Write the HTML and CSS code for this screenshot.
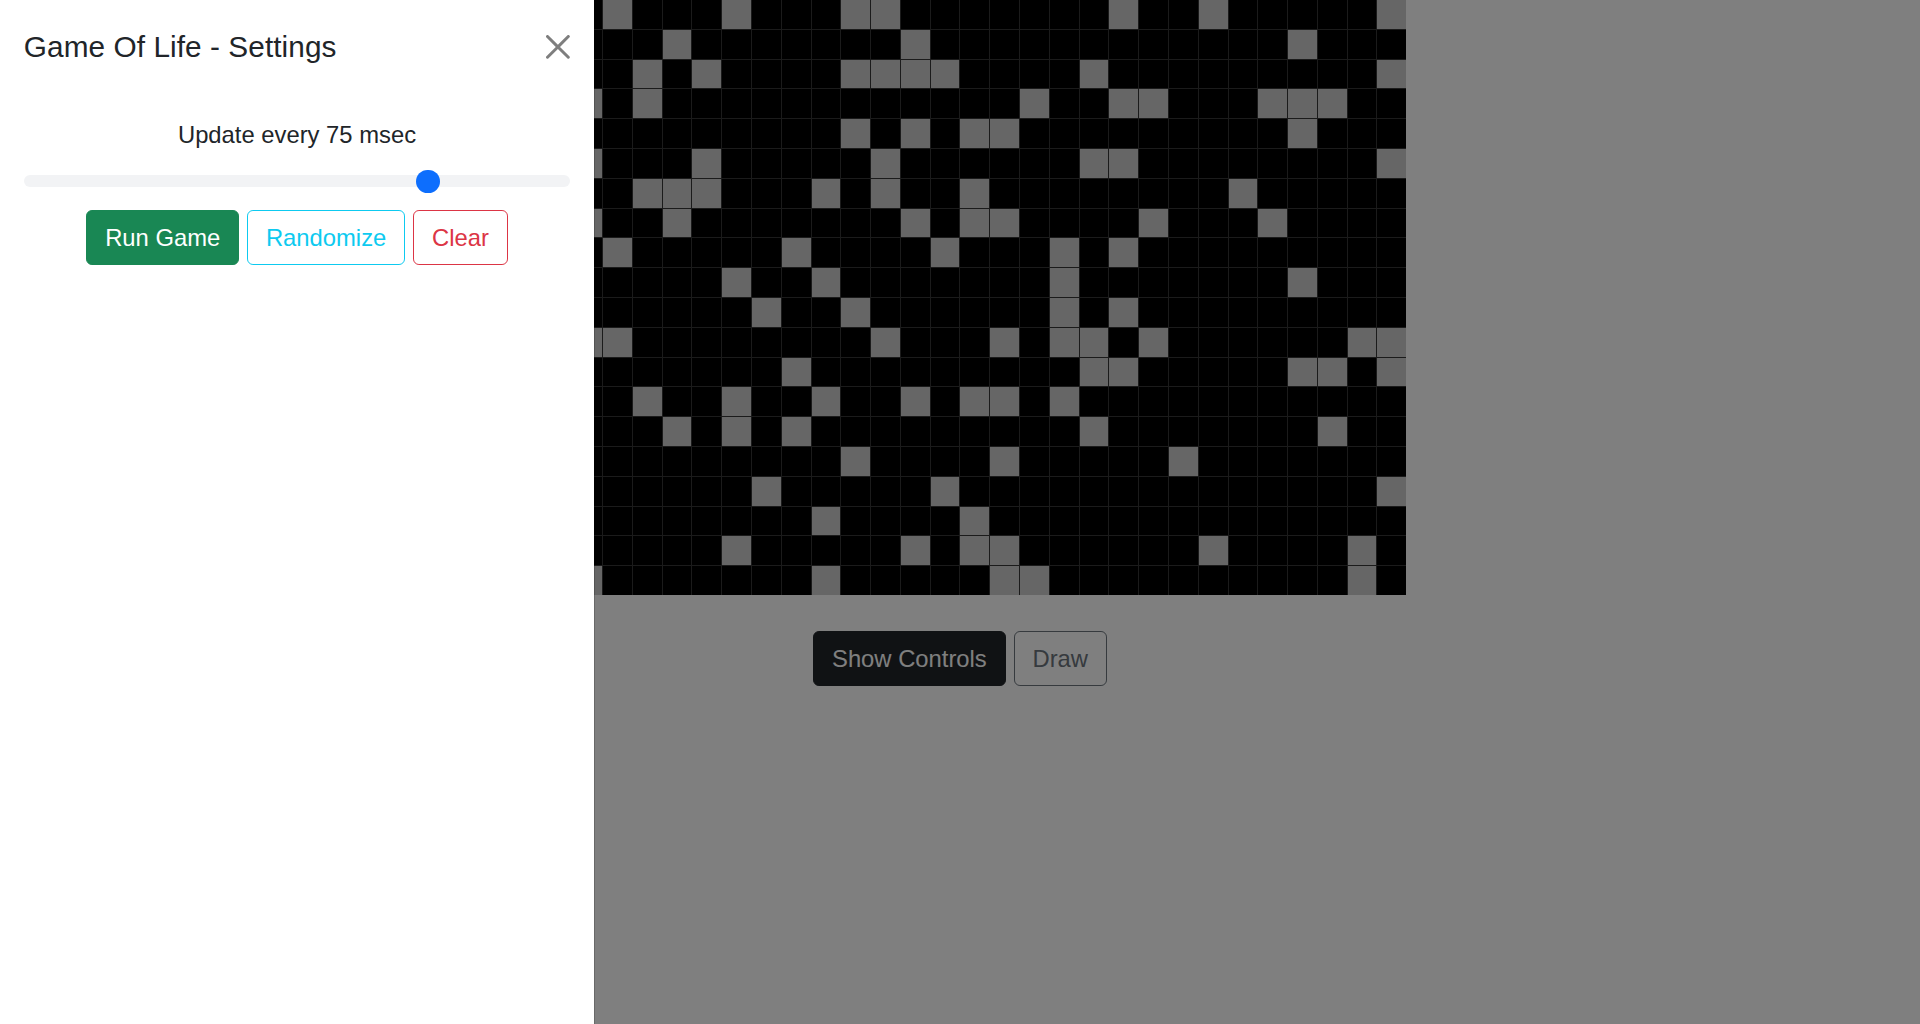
FILE: index.html
```html
<!DOCTYPE html>
<html lang="en">
<head>
<meta charset="utf-8">
<title>Game Of Life</title>
<link rel="stylesheet" href="styles.css">
</head>
<body>
<main class="page">
  <div class="board">
    <i></i><i></i><i></i><i class="on"></i><i></i><i></i><i></i><i class="on"></i><i></i><i></i><i></i><i class="on"></i><i class="on"></i><i></i><i></i><i></i><i></i><i></i><i></i><i></i><i class="on"></i><i></i><i></i><i class="on"></i><i></i><i></i><i></i><i></i><i></i><i class="on"></i>
    <i></i><i></i><i></i><i></i><i></i><i class="on"></i><i></i><i></i><i></i><i></i><i></i><i></i><i></i><i class="on"></i><i></i><i></i><i></i><i></i><i></i><i></i><i></i><i></i><i></i><i></i><i></i><i></i><i class="on"></i><i></i><i></i><i></i>
    <i></i><i></i><i></i><i></i><i class="on"></i><i></i><i class="on"></i><i></i><i></i><i></i><i></i><i class="on"></i><i class="on"></i><i class="on"></i><i class="on"></i><i></i><i></i><i></i><i></i><i class="on"></i><i></i><i></i><i></i><i></i><i></i><i></i><i></i><i></i><i></i><i class="on"></i>
    <i></i><i></i><i class="on"></i><i></i><i class="on"></i><i></i><i></i><i></i><i></i><i></i><i></i><i></i><i></i><i></i><i></i><i></i><i></i><i class="on"></i><i></i><i></i><i class="on"></i><i class="on"></i><i></i><i></i><i></i><i class="on"></i><i class="on"></i><i class="on"></i><i></i><i></i>
    <i></i><i></i><i></i><i></i><i></i><i></i><i></i><i></i><i></i><i></i><i></i><i class="on"></i><i></i><i class="on"></i><i></i><i class="on"></i><i class="on"></i><i></i><i></i><i></i><i></i><i></i><i></i><i></i><i></i><i></i><i class="on"></i><i></i><i></i><i></i>
    <i></i><i></i><i class="on"></i><i></i><i></i><i></i><i class="on"></i><i></i><i></i><i></i><i></i><i></i><i class="on"></i><i></i><i></i><i></i><i></i><i></i><i></i><i class="on"></i><i class="on"></i><i></i><i></i><i></i><i></i><i></i><i></i><i></i><i></i><i class="on"></i>
    <i></i><i></i><i></i><i></i><i class="on"></i><i class="on"></i><i class="on"></i><i></i><i></i><i></i><i class="on"></i><i></i><i class="on"></i><i></i><i></i><i class="on"></i><i></i><i></i><i></i><i></i><i></i><i></i><i></i><i></i><i class="on"></i><i></i><i></i><i></i><i></i><i></i>
    <i></i><i></i><i class="on"></i><i></i><i></i><i class="on"></i><i></i><i></i><i></i><i></i><i></i><i></i><i></i><i class="on"></i><i></i><i class="on"></i><i class="on"></i><i></i><i></i><i></i><i></i><i class="on"></i><i></i><i></i><i></i><i class="on"></i><i></i><i></i><i></i><i></i>
    <i></i><i></i><i></i><i class="on"></i><i></i><i></i><i></i><i></i><i></i><i class="on"></i><i></i><i></i><i></i><i></i><i class="on"></i><i></i><i></i><i></i><i class="on"></i><i></i><i class="on"></i><i></i><i></i><i></i><i></i><i></i><i></i><i></i><i></i><i></i>
    <i></i><i></i><i></i><i></i><i></i><i></i><i></i><i class="on"></i><i></i><i></i><i class="on"></i><i></i><i></i><i></i><i></i><i></i><i></i><i></i><i class="on"></i><i></i><i></i><i></i><i></i><i></i><i></i><i></i><i class="on"></i><i></i><i></i><i></i>
    <i></i><i></i><i></i><i></i><i></i><i></i><i></i><i></i><i class="on"></i><i></i><i></i><i class="on"></i><i></i><i></i><i></i><i></i><i></i><i></i><i class="on"></i><i></i><i class="on"></i><i></i><i></i><i></i><i></i><i></i><i></i><i></i><i></i><i></i>
    <i></i><i></i><i class="on"></i><i class="on"></i><i></i><i></i><i></i><i></i><i></i><i></i><i></i><i></i><i class="on"></i><i></i><i></i><i></i><i class="on"></i><i></i><i class="on"></i><i class="on"></i><i></i><i class="on"></i><i></i><i></i><i></i><i></i><i></i><i></i><i class="on"></i><i class="on"></i>
    <i></i><i></i><i></i><i></i><i></i><i></i><i></i><i></i><i></i><i class="on"></i><i></i><i></i><i></i><i></i><i></i><i></i><i></i><i></i><i></i><i class="on"></i><i class="on"></i><i></i><i></i><i></i><i></i><i></i><i class="on"></i><i class="on"></i><i></i><i class="on"></i>
    <i></i><i></i><i></i><i></i><i class="on"></i><i></i><i></i><i class="on"></i><i></i><i></i><i class="on"></i><i></i><i></i><i class="on"></i><i></i><i class="on"></i><i class="on"></i><i></i><i class="on"></i><i></i><i></i><i></i><i></i><i></i><i></i><i></i><i></i><i></i><i></i><i></i>
    <i></i><i></i><i></i><i></i><i></i><i class="on"></i><i></i><i class="on"></i><i></i><i class="on"></i><i></i><i></i><i></i><i></i><i></i><i></i><i></i><i></i><i></i><i class="on"></i><i></i><i></i><i></i><i></i><i></i><i></i><i></i><i class="on"></i><i></i><i></i>
    <i></i><i></i><i></i><i></i><i></i><i></i><i></i><i></i><i></i><i></i><i></i><i class="on"></i><i></i><i></i><i></i><i></i><i class="on"></i><i></i><i></i><i></i><i></i><i></i><i class="on"></i><i></i><i></i><i></i><i></i><i></i><i></i><i></i>
    <i></i><i></i><i></i><i></i><i></i><i></i><i></i><i></i><i class="on"></i><i></i><i></i><i></i><i></i><i></i><i class="on"></i><i></i><i></i><i></i><i></i><i></i><i></i><i></i><i></i><i></i><i></i><i></i><i></i><i></i><i></i><i class="on"></i>
    <i></i><i></i><i></i><i></i><i></i><i></i><i></i><i></i><i></i><i></i><i class="on"></i><i></i><i></i><i></i><i></i><i class="on"></i><i></i><i></i><i></i><i></i><i></i><i></i><i></i><i></i><i></i><i></i><i></i><i></i><i></i><i></i>
    <i></i><i></i><i></i><i></i><i></i><i></i><i></i><i class="on"></i><i></i><i></i><i></i><i></i><i></i><i class="on"></i><i></i><i class="on"></i><i class="on"></i><i></i><i></i><i></i><i></i><i></i><i></i><i class="on"></i><i></i><i></i><i></i><i></i><i class="on"></i><i></i>
    <i></i><i></i><i class="on"></i><i></i><i></i><i></i><i></i><i></i><i></i><i></i><i class="on"></i><i></i><i></i><i></i><i></i><i></i><i class="on"></i><i class="on"></i><i></i><i></i><i></i><i></i><i></i><i></i><i></i><i></i><i></i><i></i><i class="on"></i><i></i>
  </div>
  <div class="controls">
    <button class="btn btn-dark" type="button">Show Controls</button>
    <button class="btn btn-outline-secondary" type="button">Draw</button>
  </div>
</main>

<div class="backdrop"></div>

<aside class="offcanvas">
  <div class="oc-header">
    <h5 class="oc-title">Game Of Life - Settings</h5>
    <button class="btn-close" type="button" aria-label="Close">
      <svg viewBox="0 0 16 16" width="23.8" height="23.8"><path fill="#000" d="M.293.293a1 1 0 0 1 1.414 0L8 6.586 14.293.293a1 1 0 1 1 1.414 1.414L9.414 8l6.293 6.293a1 1 0 0 1-1.414 1.414L8 9.414l-6.293 6.293a1 1 0 0 1-1.414-1.414L6.586 8 .293 1.707a1 1 0 0 1 0-1.414z"/></svg>
    </button>
  </div>
  <div class="oc-body">
    <label class="range-label" for="speed">Update every 75 msec</label>
    <input class="range" id="speed" type="range" min="0" max="100" value="75">
    <div class="actions">
      <button class="btn btn-success" type="button">Run Game</button>
      <button class="btn btn-outline-info" type="button">Randomize</button>
      <button class="btn btn-outline-danger" type="button">Clear</button>
    </div>
  </div>
</aside>
</body>
</html>
```

FILE: styles.css
```css
html, body {
  margin: 0;
  padding: 0;
}

body {
  font-family: "Liberation Sans", Arial, sans-serif;
  font-size: 23.8px;
  line-height: 1.5;
  color: #212529;
  background: #fff;
}

.page {
  display: flex;
  flex-direction: column;
  align-items: center;
}

.board {
  width: 892.5px;
  height: 595px;
  display: grid;
  grid-template-columns: repeat(30, 1fr);
  grid-template-rows: repeat(20, 1fr);
  gap: 1px;
  background: #363636;
}

.board i {
  display: block;
  background: #000;
}

.board .on {
  background: #cdcdcd;
}

.controls {
  display: flex;
  gap: 8px;
  margin-top: 35.7px;
}

.btn {
  font-family: inherit;
  font-size: 23.8px;
  line-height: 1.5;
  padding: 8.925px 17.85px;
  border: 1px solid transparent;
  border-radius: 5.95px;
  background: transparent;
  cursor: pointer;
}

.btn-dark {
  background: #212529;
  border-color: #212529;
  color: #fff;
}

.btn-outline-secondary {
  color: #6c757d;
  border-color: #6c757d;
}

.btn-success {
  background: #198754;
  border-color: #198754;
  color: #fff;
}

.btn-outline-info {
  color: #0dcaf0;
  border-color: #0dcaf0;
}

.btn-outline-danger {
  color: #dc3545;
  border-color: #dc3545;
}

.backdrop {
  position: fixed;
  inset: 0;
  background: rgba(0, 0, 0, 0.5);
}

.offcanvas {
  position: fixed;
  top: 0;
  left: 0;
  bottom: 0;
  width: 595px;
  box-sizing: border-box;
  display: flex;
  flex-direction: column;
  background: #fff;
  background-clip: padding-box;
  border-right: 1px solid rgba(0, 0, 0, 0.175);
}

.oc-header {
  display: flex;
  align-items: center;
  padding: 25px 23.8px 23.8px;
}

.oc-title {
  margin: 0;
  font-size: 29.75px;
  font-weight: 400;
  line-height: 1.5;
  letter-spacing: 0.08px;
}

.btn-close {
  margin-left: auto;
  margin-right: -5.6px;
  width: 23.8px;
  height: 23.8px;
  padding: 5.95px;
  box-sizing: content-box;
  border: 0;
  background: transparent;
  opacity: 0.5;
  display: flex;
  align-items: center;
  justify-content: center;
  cursor: pointer;
}

.btn-close svg {
  display: block;
}

.oc-body {
  padding: 23.8px;
}

.range-label {
  display: block;
  text-align: center;
  margin-bottom: 10.7px;
}

.range {
  -webkit-appearance: none;
  appearance: none;
  display: block;
  width: 100%;
  height: 35.7px;
  margin: 0;
  padding: 0;
  background: transparent;
}

.range:focus {
  outline: none;
}

.range::-webkit-slider-runnable-track {
  height: 11.9px;
  background: #f2f3f5;
  border-radius: 23.8px;
  border: 0;
}

.range::-webkit-slider-thumb {
  -webkit-appearance: none;
  appearance: none;
  width: 23.8px;
  height: 23.8px;
  margin-top: -5.95px;
  background: #0d6efd;
  border: 0;
  border-radius: 50%;
}

.actions {
  display: flex;
  justify-content: center;
  gap: 8px;
  margin-top: 10.4px;
}
```
